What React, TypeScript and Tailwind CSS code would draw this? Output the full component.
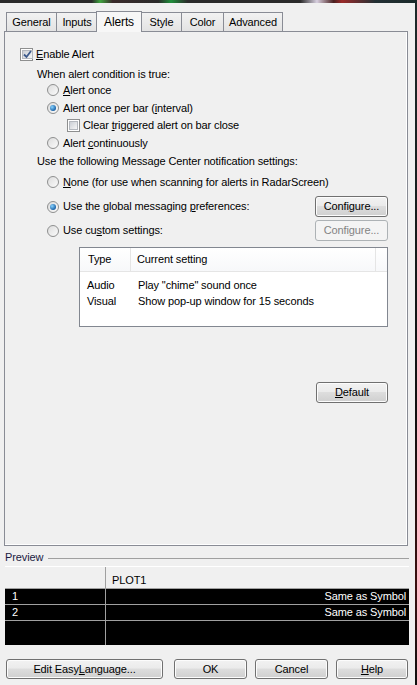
import React from "react";

const FONT = "font-['Tahoma','Liberation_Sans',sans-serif]";

const U = ({ children }: { children: React.ReactNode }) => (
  <span className="underline underline-offset-[1px]">{children}</span>
);

const Tab = ({ label, w, active }: { label: string; w: string; active?: boolean }) =>
  active ? (
    <div
      className={`${w} relative z-10 -mx-[1px] -mb-px h-[21px] pt-[2px] border border-b-0 border-[#898c95] bg-[#f7f7f7] text-[12px] leading-[16px] text-center`}
    >
      {label}
    </div>
  ) : (
    <div
      className={`${w} mt-[2px] h-[19px] pt-[2px] border border-b-0 border-r-0 last:border-r border-[#898c95] bg-[linear-gradient(#f2f2f2,#e3e3e3)] text-[11px] leading-[15px] text-center`}
    >
      {label}
    </div>
  );

const Radio = ({ checked }: { checked?: boolean }) => (
  <span className="w-[12px] h-[12px] rounded-full border border-[#8e8f8f] bg-[linear-gradient(135deg,#dcdcdc,#fbfbfb)] flex items-center justify-center shrink-0">
    {checked && (
      <span className="w-[6px] h-[6px] rounded-full bg-[radial-gradient(circle_at_35%_35%,#8ad4ff,#1b63a8_70%,#0e3f73)]" />
    )}
  </span>
);

const Check = ({ checked }: { checked?: boolean }) => (
  <span className="w-[13px] h-[13px] border border-[#8e8f8f] bg-white p-[1px] flex shrink-0">
    <span className="flex-1 bg-[linear-gradient(135deg,#cbcfd5,#f6f6f6)] border border-[#b4b8be] flex items-center justify-center">
      {checked && (
        <svg width="9" height="9" viewBox="0 0 9 9">
          <path d="M1 4.5 L3.5 7 L8 1" fill="none" stroke="#3d5a8c" strokeWidth="1.8" />
        </svg>
      )}
    </span>
  </span>
);

const Btn = ({
  children,
  w,
  h = "h-[21px]",
  disabled,
}: {
  children: React.ReactNode;
  w: string;
  h?: string;
  disabled?: boolean;
}) => (
  <div
    className={`${w} ${h} rounded-[3px] border flex items-center justify-center text-[11px] ${
      disabled
        ? "border-[#adb2b5] bg-[#f4f4f4] text-[#838383]"
        : "border-[#707070] bg-[linear-gradient(#f2f2f2_0%,#ebebeb_45%,#dddddd_50%,#cfcfcf_100%)] text-black shadow-[inset_0_0_0_1px_#fcfcfc]"
    }`}
  >
    {children}
  </div>
);

export default function App() {
  return (
    <div
      className={`w-[417px] h-[685px] bg-[#f0f0f0] flex flex-col overflow-hidden text-black tracking-[-0.12px] ${FONT}`}
    >
      {/* window frame strip */}
      <div className="h-[3px] shrink-0 bg-[linear-gradient(90deg,#2b2b2b_0%,#2b2b2b_22%,#3fa53f_24%,#3a2a2a_27%,#2b2b2b_38%,#1f8f3a_41%,#2b2b2b_45%,#2b2b2b_72%,#d8d0e0_76%,#4a2020_80%,#9a2a2a_82%,#233034_90%,#1b2a2a_100%)]" />
      <div className="flex flex-1">
        <div className="w-[415px] flex flex-col">
          {/* tabs */}
          <div className="flex items-end pl-[6px] mt-[7px] h-[21px]">
            <Tab label="General" w="w-[50px]" />
            <Tab label="Inputs" w="w-[41px]" />
            <Tab label="Alerts" w="w-[46px]" active />
            <Tab label="Style" w="w-[40px]" />
            <Tab label="Color" w="w-[42px]" />
            <Tab label="Advanced" w="w-[60px]" />
          </div>

          {/* tab page */}
          <div className="ml-[4px] w-[404px] h-[515px] border border-[#898c95] shadow-[inset_-1px_-1px_0_#ffffff] flex flex-col text-[11px] leading-[13px]">
            <div className="mt-[14px] h-[16px] pl-[15px] flex items-center gap-[3px]">
              <Check checked />
              <span>
                <U>E</U>nable Alert
              </span>
            </div>
            <div className="mt-[4px] h-[16px] pl-[32px] flex items-center">When alert condition is true:</div>
            <div className="h-[16px] pl-[42px] flex items-center gap-[4px]">
              <Radio />
              <span>
                <U>A</U>lert once
              </span>
            </div>
            <div className="mt-[2px] h-[16px] pl-[42px] flex items-center gap-[4px]">
              <Radio checked />
              <span>
                Alert once per bar (<U>i</U>nterval)
              </span>
            </div>
            <div className="mt-[1px] h-[16px] pl-[62px] flex items-center gap-[3px]">
              <Check />
              <span>
                Clear <U>t</U>riggered alert on bar close
              </span>
            </div>
            <div className="mt-[2px] h-[16px] pl-[42px] flex items-center gap-[4px]">
              <Radio />
              <span>
                Alert <U>c</U>ontinuously
              </span>
            </div>
            <div className="mt-[2px] h-[16px] pl-[32px] flex items-center">
              Use the following Message Center notification settings:
            </div>
            <div className="mt-[5px] h-[16px] pl-[42px] flex items-center gap-[4px]">
              <Radio />
              <span>
                <U>N</U>one (for use when scanning for alerts in RadarScreen)
              </span>
            </div>
            <div className="mt-[6px] h-[21px] pl-[42px] pr-[19px] flex items-center gap-[4px]">
              <Radio checked />
              <span className="flex-1">
                Use the global messaging <U>p</U>references:
              </span>
              <Btn w="w-[73px]">
                <span>
                  Confi<U>g</U>ure...
                </span>
              </Btn>
            </div>
            <div className="mt-[3px] h-[21px] pl-[42px] pr-[19px] flex items-center gap-[4px]">
              <Radio />
              <span className="flex-1">
                Use cu<U>s</U>tom settings:
              </span>
              <Btn w="w-[73px]" disabled>
                <span>
                  Confi<U>g</U>ure...
                </span>
              </Btn>
            </div>

            {/* notification list */}
            <div className="mt-[6px] ml-[74px] w-[309px] h-[80px] border border-[#828790] bg-white flex flex-col">
              <div className="h-[24px] flex border-b border-[#e5e5e5] bg-[linear-gradient(#ffffff,#f7f8fa)]">
                <div className="w-[51px] pl-[8px] flex items-center border-r border-[#e5e5e5]">Type</div>
                <div className="w-[245px] pl-[6px] flex items-center border-r border-[#e5e5e5]">Current setting</div>
                <div className="flex-1" />
              </div>
              <div className="mt-[5px] h-[16px] flex items-center">
                <span className="w-[51px] pl-[7px]">Audio</span>
                <span className="pl-[7px]">Play "chime" sound once</span>
              </div>
              <div className="h-[16px] flex items-center">
                <span className="w-[51px] pl-[7px]">Visual</span>
                <span className="pl-[7px]">Show pop-up window for 15 seconds</span>
              </div>
            </div>

            <div className="mt-[55px] pr-[19px] flex justify-end">
              <Btn w="w-[72px]">
                <span>
                  <U>D</U>efault
                </span>
              </Btn>
            </div>
          </div>

          {/* preview */}
          <div className="mt-[4px] h-[14px] pl-[5px] pr-[6px] flex items-center gap-[5px] text-[11px]">
            <span className="text-[#1a1a40]">Preview</span>
            <div className="flex-1 border-t border-[#a0a0a0] mt-[3px]" />
          </div>
          <div className="mt-[2px] ml-[5px] w-[404px] h-[79px] flex flex-col border-t border-white text-[11px]">
            <div className="h-[22px] flex bg-[#f0f0f0] border-b border-[#a0a0a0]">
              <div className="w-[101px] border-r border-[#a0a0a0]" />
              <div className="pl-[6px] pt-[5px]">PLOT1</div>
            </div>
            {["1", "2", ""].map((n, i) => (
              <div
                key={i}
                className={`flex bg-black text-white ${i < 2 ? "h-[16px] border-b border-[#a0a0a0]" : "flex-1"}`}
              >
                <div className="w-[101px] pl-[7px] border-r border-[#a0a0a0] flex items-center">{n}</div>
                <div className="flex-1 pr-[3px] flex items-center justify-end">{n && "Same as Symbol"}</div>
              </div>
            ))}
          </div>

          {/* dialog buttons */}
          <div className="mt-[14px] pl-[6px] flex items-center">
            <Btn w="w-[157px]" h="h-[20px]">
              <span>
                Edit Easy<U>L</U>anguage...
              </span>
            </Btn>
            <div className="ml-[11px]">
              <Btn w="w-[73px]" h="h-[20px]">
                OK
              </Btn>
            </div>
            <div className="ml-[8px]">
              <Btn w="w-[73px]" h="h-[20px]">
                Cancel
              </Btn>
            </div>
            <div className="ml-[8px]">
              <Btn w="w-[72px]" h="h-[20px]">
                <span>
                  <U>H</U>elp
                </span>
              </Btn>
            </div>
          </div>
        </div>
        <div className="w-[2px] bg-[linear-gradient(#1d2a2a,#101010_60%,#3a1010_85%,#101010)]" />
      </div>
    </div>
  );
}
